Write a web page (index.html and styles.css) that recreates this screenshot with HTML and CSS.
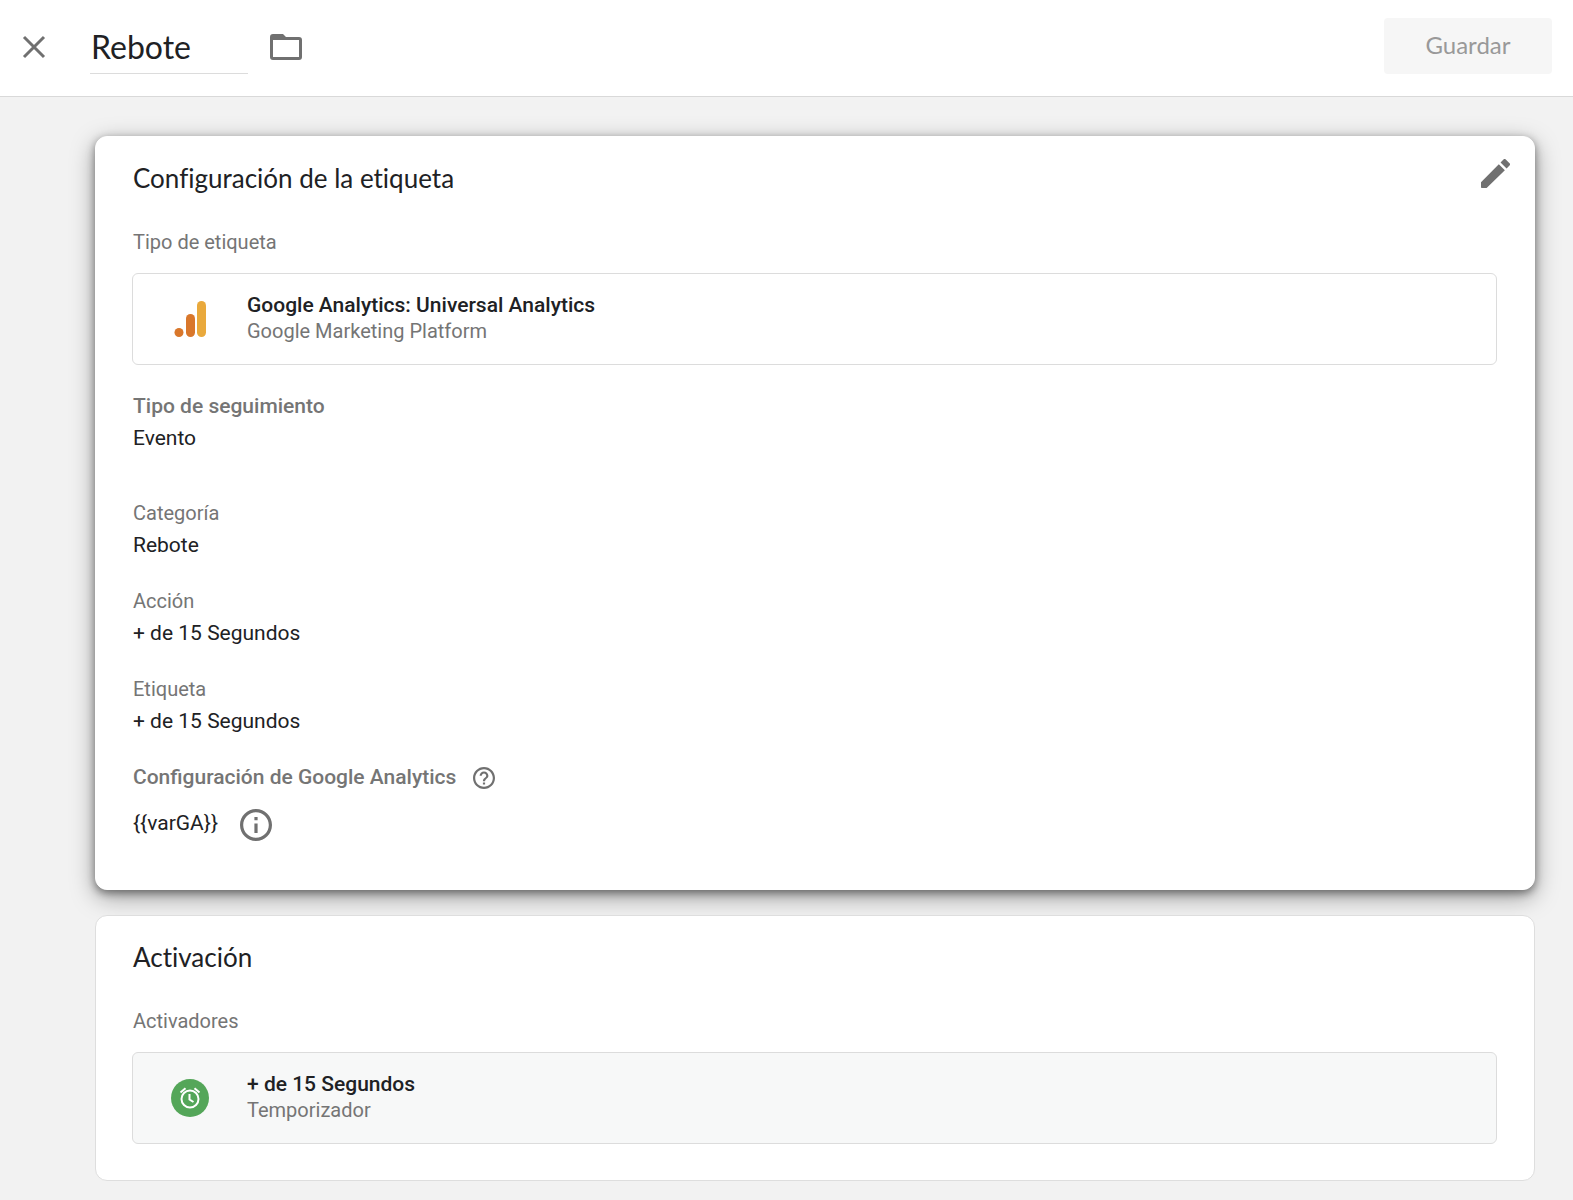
FILE: index.html
```html
<!DOCTYPE html>
<html lang="es">
<head>
<meta charset="utf-8">
<meta name="viewport" content="width=device-width, initial-scale=1">
<title>Rebote</title>
<link rel="stylesheet" href="styles.css">
</head>
<body>
<header class="topbar">
  <button class="icon-button" type="button" aria-label="Cerrar">
    <svg width="24" height="24" viewBox="0 0 24 24"><path d="M2 2L22 22M22 2L2 22" fill="none" stroke="currentColor" stroke-width="3"/></svg>
  </button>
  <input class="name" type="text" value="Rebote" aria-label="Nombre de la etiqueta">
  <button class="icon-button" type="button" aria-label="Carpeta">
    <svg width="32" height="26" viewBox="0 0 32 26"><path fill="currentColor" fill-rule="evenodd" d="M3 0h10l3 3h13a3 3 0 0 1 3 3v17a3 3 0 0 1-3 3H3a3 3 0 0 1-3-3V3a3 3 0 0 1 3-3zM3 6v17h26V6z"/></svg>
  </button>
  <button class="save" type="button" disabled>Guardar</button>
</header>
<main class="content">
  <section class="card raised">
    <div class="card-head">
      <h2 class="card-title">Configuración de la etiqueta</h2>
      <button class="icon-button edit" type="button" aria-label="Editar">
        <svg width="29" height="29" viewBox="3 3 18 18"><path fill="currentColor" d="M3 17.500V20.500q0 .5 .5 .5H6.500L17.81 9.940l-3.750-3.750zM20.710 7.040a1 1 0 0 0 0-1.410l-2.340-2.340a1 1 0 0 0-1.410 0l-1.830 1.830 3.750 3.750 1.830-1.830z"/></svg>
      </button>
    </div>
    <p class="label">Tipo de etiqueta</p>
    <div class="item">
      <span class="item-icon">
        <svg width="32" height="36" viewBox="0 0 32 36"><rect x="23" width="9" height="36" rx="4.5" fill="#e9a93c"/><rect x="12" y="13" width="9" height="23" rx="4.5" fill="#d9772b"/><circle cx="5" cy="31.500" r="4.500" fill="#d9772b"/></svg>
      </span>
      <div class="item-text">
        <p class="item-name">Google Analytics: Universal Analytics</p>
        <p class="item-sub">Google Marketing Platform</p>
      </div>
    </div>
    <dl class="fields">
      <div class="field main-field"><dt class="label strong">Tipo de seguimiento</dt><dd class="value">Evento</dd></div>
      <div class="field"><dt class="label">Categoría</dt><dd class="value">Rebote</dd></div>
      <div class="field"><dt class="label">Acción</dt><dd class="value">+ de 15 Segundos</dd></div>
      <div class="field"><dt class="label">Etiqueta</dt><dd class="value">+ de 15 Segundos</dd></div>
      <div class="field settings">
        <dt class="label strong">Configuración de Google Analytics
          <button class="icon-button" type="button" aria-label="Ayuda">
            <svg width="22" height="22" viewBox="2 2 20 20"><path fill="currentColor" d="M11 18h2v-2h-2v2zm1-16C6.480 2 2 6.480 2 12s4.480 10 10 10 10-4.480 10-10S17.520 2 12 2zm0 18c-4.410 0-8-3.590-8-8s3.590-8 8-8 8 3.590 8 8-3.590 8-8 8zm0-14c-2.210 0-4 1.790-4 4h2c0-1.100.9-2 2-2s2 .9 2 2c0 2-3 1.750-3 5h2c0-2.250 3-2.500 3-5 0-2.210-1.790-4-4-4z"/></svg>
          </button>
        </dt>
        <dd class="value">{{varGA}}
          <button class="icon-button" type="button" aria-label="Información">
            <svg width="32" height="32" viewBox="2 2 20 20"><path fill="currentColor" d="M11 7h2v2h-2zm0 4h2v6h-2zm1-9C6.480 2 2 6.480 2 12s4.480 10 10 10 10-4.480 10-10S17.520 2 12 2zm0 18c-4.410 0-8-3.590-8-8s3.590-8 8-8 8 3.590 8 8-3.590 8-8 8z"/></svg>
          </button>
        </dd>
      </div>
    </dl>
  </section>
  <section class="card">
    <div class="card-head">
      <h2 class="card-title">Activación</h2>
    </div>
    <p class="label">Activadores</p>
    <div class="item shaded">
      <span class="item-icon">
        <svg width="38" height="38" viewBox="0 0 38 38"><circle cx="19" cy="19" r="19" fill="#54a659"/><g fill="none" stroke="#fff" stroke-width="2"><circle cx="19" cy="20" r="8.500"/><path d="M18.500 15v5.500l4 2.500M9.500 13.500l5-4.200M28.500 13.500l-5-4.200"/></g></svg>
      </span>
      <div class="item-text">
        <p class="item-name">+ de 15 Segundos</p>
        <p class="item-sub">Temporizador</p>
      </div>
    </div>
  </section>
</main>
</body>
</html>
```
FILE: styles.css
```css
* { box-sizing: border-box; }
body {
  margin: 0;
  background: #f2f2f2;
  color: #202124;
  font: 21px/24px Roboto, sans-serif;
}
p, h2, dl, dd { margin: 0; }
svg { display: block; }

.icon-button {
  padding: 0;
  border: 0;
  background: none;
  color: #707070;
}

.topbar {
  display: flex;
  align-items: center;
  height: 97px;
  padding: 0 21px 4px 22px;
  background: #fff;
  border-bottom: 1px solid #d9d9d9;
}
.topbar .icon-button { padding-top: 2px; }
.name {
  width: 158px;
  height: 56px;
  margin: 0 22px 0 44px;
  padding: 1px 0 0 1px;
  border: 0;
  border-bottom: 1px solid #dcdcdc;
  background: none;
  color: #202124;
  font: 32px/40px Lato, sans-serif;
}
.save {
  width: 168px;
  height: 56px;
  margin-left: auto;
  padding: 0 0 2px;
  border: 0;
  border-radius: 4px;
  background: #f6f6f6;
  color: #999;
  font: 24px/32px Lato, sans-serif;
}

.content {
  display: grid;
  gap: 25px;
  padding: 39px 38px 20px 95px;
}
.card {
  padding: 24px 37px 36px;
  background: #fff;
  border: 1px solid #dedede;
  border-radius: 12px;
}
.raised {
  padding-bottom: 50px;
  border-color: #fff;
  box-shadow: 0 7px 24px rgba(0, 0, 0, .36), 0 3px 8px rgba(0, 0, 0, .42);
}
.card-head {
  display: flex;
  justify-content: space-between;
  height: 69px;
}
.card-title {
  font: 26px/34px Lato, sans-serif;
  font-variant-ligatures: none;
}
.edit {
  align-self: flex-start;
  margin: -2px -13px 0 0;
}
.label {
  color: #757575;
  font-size: 20px;
}
.strong { font-weight: 500; font-size: 21px; }

.item {
  display: flex;
  align-items: center;
  height: 92px;
  margin: 19px 0 0 -1px;
  border: 1px solid #dcdcdc;
  border-radius: 6px;
}
.shaded { background: #f7f8f8; }
.item-icon {
  display: flex;
  justify-content: center;
  width: 114px;
}
.item-text {
  padding-bottom: 2px;
  line-height: 26px;
}
.item-name { font-weight: 500; }
.item-sub { color: #757575; font-size: 20px; }

.fields {
  display: grid;
  gap: 32px;
  margin-top: 29px;
}
.field {
  display: grid;
  gap: 8px;
}
.main-field { margin-bottom: 19px; }
.settings { gap: 18px; }
.settings .label, .settings .value {
  display: flex;
  align-items: center;
}
.settings .label { gap: 17px; }
.settings .value { gap: 22px; }
.settings .icon-button { padding-top: 2px; }
.settings .value .icon-button { margin-bottom: -2px; }
```
